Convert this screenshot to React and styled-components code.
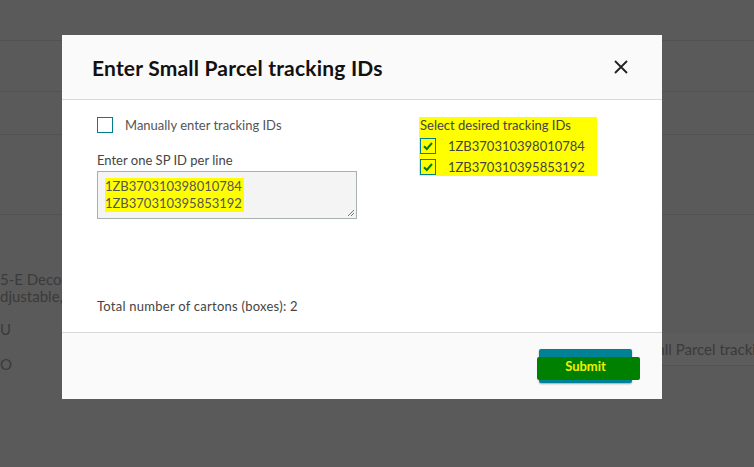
import React from "react";
import styled, { createGlobalStyle } from "styled-components";

const Global = createGlobalStyle`
  html, body { margin: 0; padding: 0; }
  body {
    width: 754px; height: 467px; overflow: hidden;
    background: #5a5a5a;
    font-family: Lato, "Open Sans", Arial, sans-serif;
  }
`;

const Page = styled.div`
  position: relative;
  width: 754px;
  height: 467px;
  overflow: hidden;
  background: #5a5a5a;
  color: #3a3a3a;
  font-size: 15px;
`;

const BgRow = styled.div`
  height: ${(p) => p.$h}px;
  border-bottom: 1px solid #525252;
  box-sizing: border-box;
`;

const BgContent = styled.div`
  display: flex;
  justify-content: space-between;
  padding-top: 56px;
`;

const BgLeft = styled.div`
  display: flex;
  flex-direction: column;
  line-height: 17px;
  white-space: nowrap;
`;

const BgGap = styled.div`
  height: ${(p) => p.$h}px;
`;

const BgRight = styled.div`
  margin-top: -56px;
  padding-top: 118px;
  width: 120px;
  overflow: hidden;
`;

const BgBand = styled.div`
  height: 32px;
  display: flex;
  align-items: center;
  white-space: nowrap;
  border-bottom: 1px solid #525252;
  background: #5c5c5c;
  padding-left: 3px;
`;

const Modal = styled.div`
  position: absolute;
  left: 62px;
  top: 35px;
  width: 600px;
  background: #fff;
  display: flex;
  flex-direction: column;
`;

const Header = styled.div`
  height: 64px;
  background: #fafafa;
  border-bottom: 1px solid #d9d9d9;
  display: flex;
  align-items: center;
  justify-content: space-between;
  padding: 0 33px 0 30px;
`;

const Title = styled.h2`
  margin: 0;
  font-size: 21px;
  font-weight: 700;
  color: #111;
  letter-spacing: 0.2px;
`;

const Close = styled.button`
  border: 0;
  background: none;
  padding: 0;
  width: 16px;
  height: 16px;
  display: flex;
  cursor: pointer;
`;

const Body = styled.div`
  height: 233px;
  box-sizing: border-box;
  border-bottom: 1px solid #d9d9d9;
  display: grid;
  grid-template-columns: 323px 1fr;
  padding: 17px 35px 17px 35px;
`;

const Col = styled.div`
  display: flex;
  flex-direction: column;
`;

const CheckRow = styled.label`
  display: flex;
  align-items: center;
  height: 16px;
  gap: ${(p) => p.$gap || 12}px;
  font-size: 13px;
  color: #555;
  white-space: nowrap;
`;

const Box = styled.span`
  width: 16px;
  height: 16px;
  box-sizing: border-box;
  border: 1px solid #00808a;
  background: ${(p) => (p.$checked ? "#ffff00" : "#fff")};
  display: flex;
  align-items: center;
  justify-content: center;
  flex: none;
`;

const FieldLabel = styled.div`
  margin-top: 19px;
  font-size: 13px;
  color: #444;
  line-height: 17px;
`;

const TextArea = styled.div`
  position: relative;
  margin-top: 2px;
  width: 260px;
  height: 48px;
  box-sizing: border-box;
  border: 1px solid #a9b0b0;
  background: #f3f4f3;
  padding: 6px 0 0 7px;
  font-size: 13px;
  line-height: 17px;
  color: #555;
`;

const Hl = styled.span`
  display: ${(p) => (p.$block ? "block" : "inline")};
  background: #ffff00;
  color: #555;
  width: ${(p) => (p.$w ? p.$w + "px" : "auto")};
`;

const Resize = styled.svg`
  position: absolute;
  right: 1px;
  bottom: 1px;
`;

const Total = styled.div`
  margin-top: auto;
  font-size: 13px;
  letter-spacing: 0.25px;
  color: #444;
  line-height: 17px;
`;

const RightCol = styled.div`
  display: flex;
  flex-direction: column;
  align-items: flex-start;
`;

const HlBlock = styled.div`
  background: #ffff00;
  display: flex;
  flex-direction: column;
  gap: 5px;
  padding: 0 12px 1px 1px;
  margin-left: -1px;
`;

const SelTitle = styled.div`
  font-size: 13px;
  color: #444;
  line-height: 16px;
`;

const IdText = styled.span`
  color: #444;
`;

const Footer = styled.div`
  height: 66px;
  background: #fafafa;
  display: flex;
  align-items: center;
  justify-content: flex-end;
  padding-right: 30px;
`;

const Submit = styled.button`
  position: relative;
  width: 93px;
  height: 34px;
  border: 0;
  border-radius: 2px;
  background: #008296;
  box-shadow: 0 1px 2px rgba(0, 0, 0, 0.35);
  color: #f0f000;
  font-family: Lato, "Open Sans", Arial, sans-serif;
  font-size: 13px;
  font-weight: 700;
  padding: 0;
  cursor: pointer;
  &::before {
    content: "";
    position: absolute;
    left: -2px;
    right: -8px;
    top: 8px;
    bottom: 3px;
    background: #008000;
    border-radius: 2px;
  }
  & > span {
    position: relative;
  }
`;

const Check = () => (
  <svg width="12" height="12" viewBox="0 0 12 12">
    <path d="M2 6.2 L4.8 9 L10 3" fill="none" stroke="#008000" strokeWidth="2" />
  </svg>
);

export default function App() {
  return (
    <>
      <Global />
      <Page>
        <BgRow $h={41} />
        <BgRow $h={51} />
        <BgRow $h={43} />
        <BgRow $h={80} />
        <BgContent>
          <BgLeft>
            <span>5-E Deco Z</span>
            <span>djustable, f</span>
            <BgGap $h={16} />
            <span>U</span>
            <BgGap $h={18} />
            <span>O</span>
          </BgLeft>
          <BgRight>
            <BgBand>Small Parcel tracking IDs</BgBand>
          </BgRight>
        </BgContent>

        <Modal>
          <Header>
            <Title>Enter Small Parcel tracking IDs</Title>
            <Close aria-label="Close">
              <svg width="16" height="16" viewBox="0 0 16 16">
                <path d="M2 2 L14 14 M14 2 L2 14" stroke="#222" strokeWidth="1.8" />
              </svg>
            </Close>
          </Header>
          <Body>
            <Col>
              <CheckRow>
                <Box />
                Manually enter tracking IDs
              </CheckRow>
              <FieldLabel>Enter one SP ID per line</FieldLabel>
              <TextArea>
                <Hl $block $w={139}>1ZB370310398010784</Hl>
                <Hl $block $w={139}>1ZB370310395853192</Hl>
                <Resize width="9" height="9" viewBox="0 0 9 9">
                  <path d="M8 2 L2 8 M8 5 L5 8" stroke="#777" strokeWidth="1" />
                </Resize>
              </TextArea>
              <Total>Total number of cartons (boxes): 2</Total>
            </Col>
            <RightCol>
              <HlBlock>
                <SelTitle>Select desired tracking IDs</SelTitle>
                <CheckRow $gap={12}>
                  <Box $checked>
                    <Check />
                  </Box>
                  <IdText>1ZB370310398010784</IdText>
                </CheckRow>
                <CheckRow $gap={12}>
                  <Box $checked>
                    <Check />
                  </Box>
                  <IdText>1ZB370310395853192</IdText>
                </CheckRow>
              </HlBlock>
            </RightCol>
          </Body>
          <Footer>
            <Submit>
              <span>Submit</span>
            </Submit>
          </Footer>
        </Modal>
      </Page>
    </>
  );
}
